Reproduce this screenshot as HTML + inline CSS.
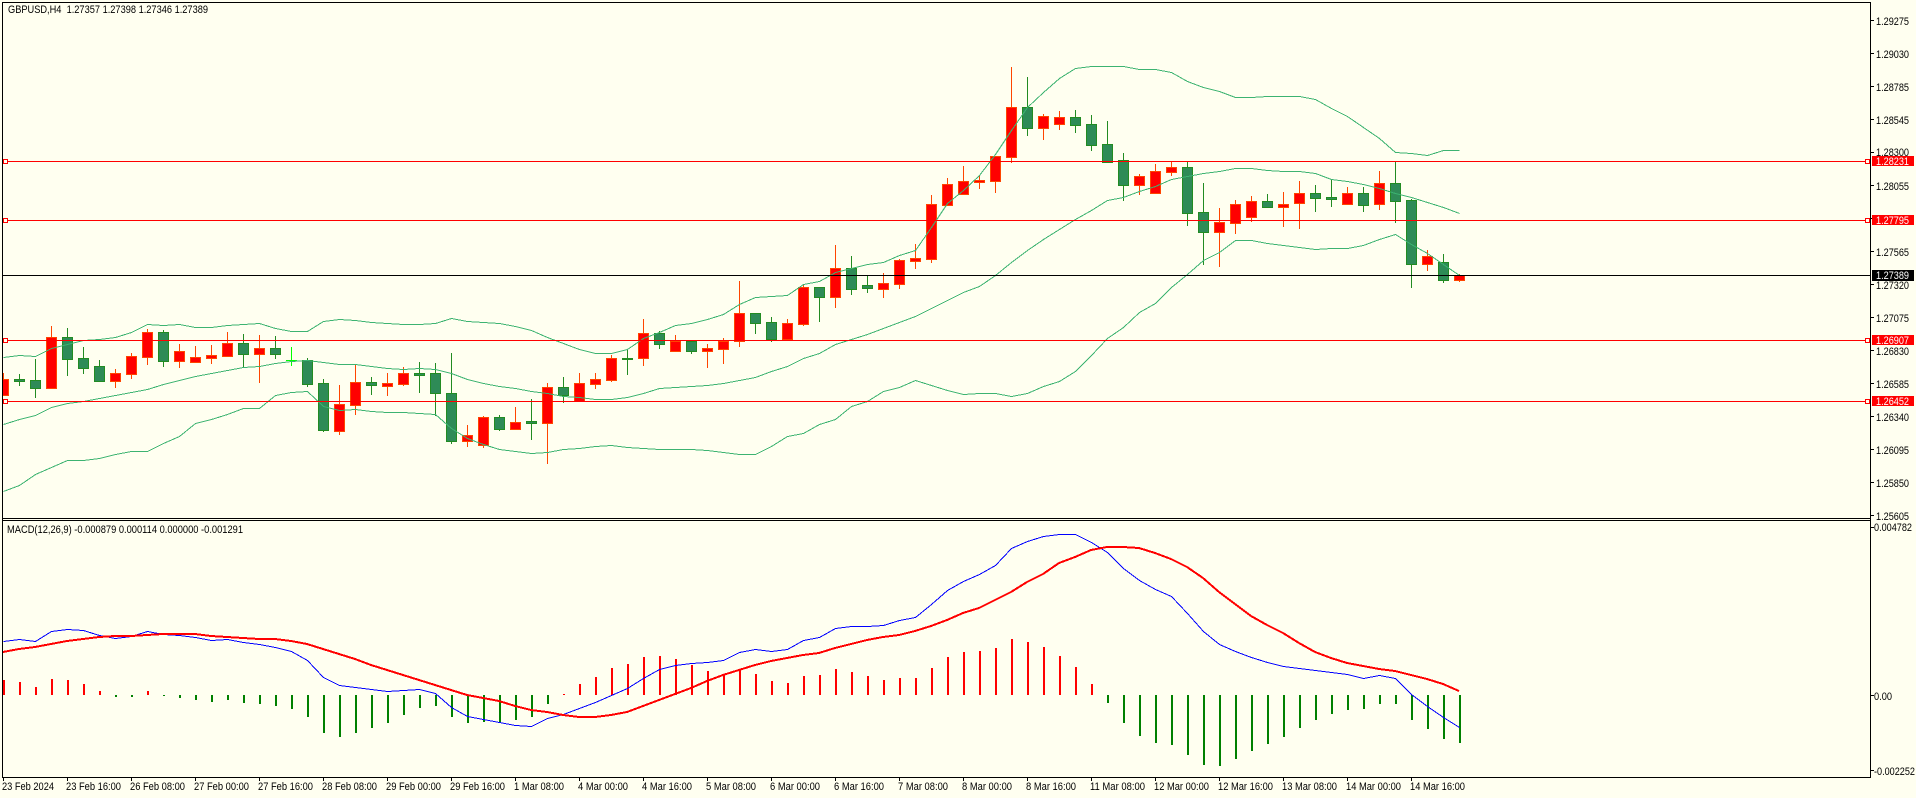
<!DOCTYPE html>
<html><head><meta charset="utf-8"><title>GBPUSD,H4</title>
<style>
html,body{margin:0;padding:0;width:1916px;height:798px;overflow:hidden;background:#fffff0}
svg{display:block;position:absolute;left:0;top:0}
text{font-family:"Liberation Sans",sans-serif;font-size:11px;fill:#000}
text.w{fill:#fff}
</style></head><body>
<svg width="1916" height="798" viewBox="0 0 1916 798" xmlns="http://www.w3.org/2000/svg">
<defs><clipPath id="c1"><rect x="3" y="3" width="1867" height="515"/></clipPath>
<clipPath id="c2"><rect x="3" y="521" width="1867" height="256"/></clipPath></defs>
<rect width="1916" height="798" fill="#fffff0"/>
<g clip-path="url(#c1)" shape-rendering="crispEdges">
<path fill="none" stroke="#ff4500" d="M3.5 373V396M51.5 326V388M115.5 369V388M131.5 353V379M147.5 329V365M179.5 344V368M195.5 346V362M211.5 345V364M227.5 332V357M259.5 335V383M339.5 385V435M355.5 365V415M387.5 373V396M403.5 367V386M467.5 425V447M483.5 416V448M515.5 407V430M547.5 383V464M579.5 373V401M595.5 373V389M611.5 355V382M643.5 319V366M675.5 335V351M707.5 344V368M723.5 338V364M739.5 281V347M787.5 319V341M803.5 284V326M835.5 245V308M883.5 273V298M899.5 259V289M915.5 244V269M931.5 195V263M947.5 178V205M963.5 166V194M979.5 176V189M995.5 156V193M1011.5 67V163M1043.5 114V140M1059.5 111V130M1139.5 174V195M1155.5 164V194M1171.5 162V176M1219.5 208V267M1235.5 200V234M1251.5 196V222M1283.5 192V227M1299.5 181V229M1347.5 187V205M1379.5 171V210M1427.5 250V271M1459.5 274V282"/>
<path fill="none" stroke="#228b22" d="M19.5 374V386M35.5 359V398M67.5 328V376M83.5 347V374M99.5 360V381M163.5 330V367M243.5 334V368M275.5 336V359M307.5 358V387M323.5 379V432M371.5 377V395M419.5 362V393M435.5 363V416M451.5 353V444M499.5 415V431M531.5 399V440M563.5 377V403M627.5 350V375M659.5 331V349M691.5 341V354M755.5 313V334M771.5 317V342M819.5 287V322M851.5 256V295M867.5 275V293M1027.5 77V136M1075.5 110V133M1091.5 115V151M1107.5 121V162M1123.5 153V201M1187.5 162V226M1203.5 183V265M1267.5 194V208M1315.5 185V212M1331.5 179V207M1363.5 187V212M1395.5 162V223M1411.5 199V288M1443.5 254V283"/>
<path fill="none" stroke="#00ff00" d="M291.5 347V366M286 360.5H297"/>
<g fill="#ff0000" stroke="#ff4500">
<rect x="-1.5" y="379.5" width="10" height="16"/><rect x="46.5" y="337.5" width="10" height="51"/><rect x="110.5" y="373.5" width="10" height="8"/><rect x="126.5" y="356.5" width="10" height="18"/><rect x="142.5" y="332.5" width="10" height="25"/><rect x="174.5" y="351.5" width="10" height="10"/><rect x="190.5" y="357.5" width="10" height="5"/><rect x="206.5" y="355.5" width="10" height="3"/><rect x="222.5" y="343.5" width="10" height="13"/><rect x="254.5" y="348.5" width="10" height="6"/><rect x="334.5" y="404.5" width="10" height="27"/><rect x="350.5" y="382.5" width="10" height="23"/><rect x="382.5" y="383.5" width="10" height="3"/><rect x="398.5" y="373.5" width="10" height="11"/><rect x="462.5" y="435.5" width="10" height="6"/><rect x="478.5" y="417.5" width="10" height="28"/><rect x="510.5" y="422.5" width="10" height="7"/><rect x="542.5" y="387.5" width="10" height="36"/><rect x="574.5" y="383.5" width="10" height="18"/><rect x="590.5" y="379.5" width="10" height="5"/><rect x="606.5" y="358.5" width="10" height="22"/><rect x="638.5" y="333.5" width="10" height="25"/><rect x="670.5" y="341.5" width="10" height="10"/><rect x="702.5" y="348.5" width="10" height="3"/><rect x="718.5" y="341.5" width="10" height="8"/><rect x="734.5" y="313.5" width="10" height="28"/><rect x="782.5" y="323.5" width="10" height="16"/><rect x="798.5" y="287.5" width="10" height="37"/><rect x="830.5" y="268.5" width="10" height="29"/><rect x="878.5" y="283.5" width="10" height="6"/><rect x="894.5" y="260.5" width="10" height="24"/><rect x="910.5" y="258.5" width="10" height="3"/><rect x="926.5" y="204.5" width="10" height="55"/><rect x="942.5" y="184.5" width="10" height="21"/><rect x="958.5" y="181.5" width="10" height="13"/><rect x="974.5" y="180.5" width="10" height="2"/><rect x="990.5" y="156.5" width="10" height="25"/><rect x="1006.5" y="107.5" width="10" height="50"/><rect x="1038.5" y="116.5" width="10" height="12"/><rect x="1054.5" y="117.5" width="10" height="7"/><rect x="1134.5" y="176.5" width="10" height="9"/><rect x="1150.5" y="171.5" width="10" height="22"/><rect x="1166.5" y="167.5" width="10" height="5"/><rect x="1214.5" y="222.5" width="10" height="10"/><rect x="1230.5" y="204.5" width="10" height="19"/><rect x="1246.5" y="201.5" width="10" height="16"/><rect x="1278.5" y="204.5" width="10" height="3"/><rect x="1294.5" y="193.5" width="10" height="10"/><rect x="1342.5" y="193.5" width="10" height="11"/><rect x="1374.5" y="183.5" width="10" height="21"/><rect x="1422.5" y="256.5" width="10" height="8"/><rect x="1454.5" y="275.5" width="10" height="5"/>
</g>
<g fill="#2e8b57" stroke="#228b22">
<rect x="14.5" y="379.5" width="10" height="2"/><rect x="30.5" y="380.5" width="10" height="8"/><rect x="62.5" y="337.5" width="10" height="22"/><rect x="78.5" y="358.5" width="10" height="10"/><rect x="94.5" y="366.5" width="10" height="15"/><rect x="158.5" y="332.5" width="10" height="29"/><rect x="238.5" y="343.5" width="10" height="11"/><rect x="270.5" y="348.5" width="10" height="6"/><rect x="302.5" y="360.5" width="10" height="24"/><rect x="318.5" y="383.5" width="10" height="47"/><rect x="366.5" y="382.5" width="10" height="3"/><rect x="414.5" y="373.5" width="10" height="2"/><rect x="430.5" y="373.5" width="10" height="20"/><rect x="446.5" y="393.5" width="10" height="48"/><rect x="494.5" y="417.5" width="10" height="12"/><rect x="526.5" y="421.5" width="10" height="2"/><rect x="558.5" y="387.5" width="10" height="8"/><rect x="622.5" y="358.5" width="10" height="1"/><rect x="654.5" y="333.5" width="10" height="11"/><rect x="686.5" y="341.5" width="10" height="10"/><rect x="750.5" y="313.5" width="10" height="10"/><rect x="766.5" y="322.5" width="10" height="17"/><rect x="814.5" y="287.5" width="10" height="10"/><rect x="846.5" y="268.5" width="10" height="21"/><rect x="862.5" y="285.5" width="10" height="3"/><rect x="1022.5" y="107.5" width="10" height="21"/><rect x="1070.5" y="117.5" width="10" height="8"/><rect x="1086.5" y="124.5" width="10" height="21"/><rect x="1102.5" y="144.5" width="10" height="18"/><rect x="1118.5" y="160.5" width="10" height="25"/><rect x="1182.5" y="167.5" width="10" height="46"/><rect x="1198.5" y="212.5" width="10" height="20"/><rect x="1262.5" y="201.5" width="10" height="6"/><rect x="1310.5" y="193.5" width="10" height="5"/><rect x="1326.5" y="197.5" width="10" height="2"/><rect x="1358.5" y="193.5" width="10" height="12"/><rect x="1390.5" y="183.5" width="10" height="18"/><rect x="1406.5" y="200.5" width="10" height="64"/><rect x="1438.5" y="262.5" width="10" height="18"/>
</g>
<g fill="none" stroke="#3cb371" transform="translate(.5 .5)">
<polyline points="3,357 19,355 35,356 51,348 67,344 83,340 99,339 115,337 131,332 147,324 163,325 179,324 195,327 211,327 227,325 243,324 259,323 275,328 291,331 307,331 323,321 339,319 355,320 371,322 387,323 403,324 419,324 435,323 451,318 467,321 483,322 499,323 515,326 531,330 547,337 563,343 579,349 595,353 611,353 627,349 643,338 659,332 675,325 691,323 707,319 723,314 739,304 755,297 771,296 787,295 803,284 819,281 835,272 851,268 867,264 883,262 899,255 915,250 931,227 947,203 963,190 979,175 995,154 1011,130 1027,107 1043,92 1059,78 1075,68 1091,66 1107,66 1123,66 1139,69 1155,69 1171,72 1187,81 1203,87 1219,91 1235,97 1251,97 1267,96 1283,96 1299,96 1315,99 1331,108 1347,116 1363,127 1379,138 1395,152 1411,153 1427,155 1443,150 1459,150"/>
<polyline points="3,424 19,419 35,415 51,407 67,403 83,401 99,398 115,395 131,392 147,389 163,384 179,380 195,376 211,373 227,370 243,367 259,366 275,363 291,361 307,360 323,362 339,364 355,364 371,366 387,368 403,369 419,368 435,369 451,373 467,379 483,383 499,386 515,388 531,391 547,393 563,396 579,397 595,399 611,399 627,397 643,393 659,388 675,387 691,386 707,385 723,383 739,380 755,377 771,371 787,366 803,358 819,353 835,344 851,339 867,334 883,328 899,322 915,316 931,308 947,300 963,292 979,286 995,275 1011,262 1027,250 1043,239 1059,229 1075,219 1091,210 1107,200 1123,197 1139,191 1155,186 1171,179 1187,176 1203,173 1219,171 1235,168 1251,168 1267,170 1283,171 1299,171 1315,173 1331,179 1347,181 1363,184 1379,188 1395,193 1411,197 1427,202 1443,207 1459,213"/>
<polyline points="3,491 19,485 35,474 51,467 67,460 83,460 99,458 115,454 131,451 147,451 163,443 179,436 195,423 211,419 227,414 243,408 259,408 275,395 291,392 307,391 323,406 339,410 355,409 371,411 387,412 403,412 419,413 435,414 451,428 467,438 483,444 499,449 515,451 531,453 547,452 563,449 579,448 595,446 611,445 627,447 643,448 659,449 675,449 691,449 707,450 723,452 739,454 755,454 771,446 787,436 803,433 819,424 835,419 851,406 867,401 883,391 899,387 915,380 931,385 947,390 963,394 979,393 995,393 1011,396 1027,393 1043,386 1059,381 1075,371 1091,355 1107,338 1123,327 1139,312 1155,303 1171,287 1187,274 1203,260 1219,252 1235,240 1251,240 1267,243 1283,245 1299,247 1315,249 1331,248 1347,248 1363,245 1379,239 1395,234 1411,244 1427,253 1443,264 1459,275"/>
</g>
</g>
<g clip-path="url(#c2)" shape-rendering="crispEdges">
<path fill="none" stroke="#ff0000" stroke-width="2" d="M4 695V680M20 695V682M36 695V687M52 695V679M68 695V680M84 695V684M100 695V691M148 695V691M564 695V694M580 695V684M596 695V677M612 695V668M628 695V664M644 695V657M660 695V656M676 695V659M692 695V665M708 695V671M724 695V675M740 695V670M756 695V674M772 695V681M788 695V683M804 695V676M820 695V675M836 695V669M852 695V672M868 695V676M884 695V680M900 695V678M916 695V678M932 695V668M948 695V657M964 695V652M980 695V651M996 695V648M1012 695V639M1028 695V642M1044 695V647M1060 695V656M1076 695V667M1092 695V684"/>
<path fill="none" stroke="#008000" stroke-width="2" d="M116 695V697M132 695V697M164 695V696M180 695V698M196 695V700M212 695V702M228 695V700M244 695V703M260 695V704M276 695V706M292 695V709M308 695V717M324 695V733M340 695V737M356 695V733M372 695V728M388 695V723M404 695V715M420 695V708M436 695V706M452 695V717M468 695V723M484 695V722M500 695V723M516 695V720M532 695V717M548 695V704M1108 695V703M1124 695V723M1140 695V736M1156 695V743M1172 695V745M1188 695V755M1204 695V765M1220 695V766M1236 695V759M1252 695V751M1268 695V744M1284 695V737M1300 695V728M1316 695V720M1332 695V714M1348 695V710M1364 695V709M1380 695V704M1396 695V704M1412 695V720M1428 695V729M1444 695V739M1460 695V743"/>
<polyline transform="translate(.5 .5)" fill="none" stroke="#0000ff" points="3,641 19,639 35,641 51,631 67,629 83,630 99,635 115,638 131,636 147,631 163,634 179,635 195,637 211,640 227,639 243,642 259,644 275,647 291,651 307,660 323,677 339,685 355,687 371,689 387,691 403,690 419,689 435,693 451,707 467,716 483,719 499,722 515,725 531,726 547,718 563,714 579,708 595,702 611,695 627,688 643,678 659,669 675,665 691,663 707,662 723,660 739,652 755,649 771,651 787,649 803,640 819,637 835,628 851,626 867,626 883,625 899,620 915,617 931,604 947,590 963,581 979,574 995,565 1011,548 1027,541 1043,536 1059,534 1075,534 1091,542 1107,552 1123,568 1139,580 1155,589 1171,596 1187,613 1203,631 1219,644 1235,651 1251,657 1267,662 1283,666 1299,668 1315,670 1331,672 1347,674 1363,678 1379,675 1395,678 1411,694 1427,706 1443,717 1459,727"/>
<polyline fill="none" stroke="#ff0000" stroke-width="2" points="3,652 19,649 35,647 51,644 67,641 83,639 99,637 115,636 131,636 147,635 163,634 179,634 195,634 211,636 227,637 243,638 259,639 275,639 291,641 307,644 323,649 339,654 355,659 371,665 387,670 403,675 419,680 435,685 451,690 467,695 483,698 499,701 515,706 531,710 547,712 563,715 579,717 595,717 611,715 627,712 643,706 659,700 675,694 691,688 707,681 723,675 739,670 755,665 771,661 787,658 803,655 819,653 835,648 851,644 867,640 883,637 899,635 915,631 931,626 947,620 963,613 979,608 995,600 1011,592 1027,582 1043,574 1059,563 1075,557 1091,550 1107,547 1123,547 1139,548 1155,553 1171,559 1187,567 1203,578 1219,592 1235,604 1251,616 1267,625 1283,633 1299,643 1315,652 1331,658 1347,663 1363,666 1379,669 1395,671 1411,675 1427,679 1443,684 1459,691"/>
</g>
<g shape-rendering="crispEdges">
<path fill="none" stroke="#ff0000" d="M3 161.5H1870M3 220.5H1870M3 340.5H1870M3 401.5H1870"/>
<path fill="none" stroke="#000" d="M3 275.5H1870"/>
<g fill="#fffff0" stroke="#ff0000">
<rect x="3.5" y="159.5" width="4" height="4"/><rect x="3.5" y="218.5" width="4" height="4"/><rect x="3.5" y="338.5" width="4" height="4"/><rect x="3.5" y="399.5" width="4" height="4"/>
<rect x="1865.5" y="159.5" width="4" height="4"/><rect x="1865.5" y="218.5" width="4" height="4"/><rect x="1865.5" y="338.5" width="4" height="4"/><rect x="1865.5" y="399.5" width="4" height="4"/>
</g>
<path fill="none" stroke="#000" d="M2 2.5H1871M2.5 2V778M1870.5 2V778M2 518.5H1871M2 520.5H1871M2 777.5H1871"/>
<path fill="none" stroke="#000" d="M1871 20.5h3M1871 53.5h3M1871 86.5h3M1871 119.5h3M1871 152.5h3M1871 185.5h3M1871 218.5h3M1871 251.5h3M1871 284.5h3M1871 317.5h3M1871 350.5h3M1871 383.5h3M1871 416.5h3M1871 449.5h3M1871 482.5h3M1871 515.5h3M1871 527.5h3M1871 695.5h3M1871 770.5h3M3.5 778v3M67.5 778v3M131.5 778v3M195.5 778v3M259.5 778v3M323.5 778v3M387.5 778v3M451.5 778v3M515.5 778v3M579.5 778v3M643.5 778v3M707.5 778v3M771.5 778v3M835.5 778v3M899.5 778v3M963.5 778v3M1027.5 778v3M1091.5 778v3M1155.5 778v3M1219.5 778v3M1283.5 778v3M1347.5 778v3M1411.5 778v3"/>
<rect x="1872" y="156" width="42" height="10" fill="#ff0000"/><rect x="1872" y="215" width="42" height="10" fill="#ff0000"/><rect x="1872" y="335" width="42" height="10" fill="#ff0000"/><rect x="1872" y="396" width="42" height="10" fill="#ff0000"/>
<rect x="1872" y="270" width="42" height="11" fill="#000"/>
</g>
<g lengthAdjust="spacingAndGlyphs">
<text x="8" y="13" textLength="200" lengthAdjust="spacingAndGlyphs" xml:space="preserve">GBPUSD,H4  1.27357 1.27398 1.27346 1.27389</text>
<text x="7" y="533" textLength="236" lengthAdjust="spacingAndGlyphs">MACD(12,26,9) -0.000879 0.000114 0.000000 -0.001291</text>
<text x="1876" y="25" textLength="33" lengthAdjust="spacingAndGlyphs">1.29275</text>
<text x="1876" y="58" textLength="33" lengthAdjust="spacingAndGlyphs">1.29030</text>
<text x="1876" y="91" textLength="33" lengthAdjust="spacingAndGlyphs">1.28785</text>
<text x="1876" y="124" textLength="33" lengthAdjust="spacingAndGlyphs">1.28545</text>
<text x="1876" y="156" textLength="33" lengthAdjust="spacingAndGlyphs">1.28300</text>
<text x="1876" y="190" textLength="33" lengthAdjust="spacingAndGlyphs">1.28055</text>
<text x="1876" y="256" textLength="33" lengthAdjust="spacingAndGlyphs">1.27565</text>
<text x="1876" y="289" textLength="33" lengthAdjust="spacingAndGlyphs">1.27320</text>
<text x="1876" y="322" textLength="33" lengthAdjust="spacingAndGlyphs">1.27075</text>
<text x="1876" y="355" textLength="33" lengthAdjust="spacingAndGlyphs">1.26830</text>
<text x="1876" y="388" textLength="33" lengthAdjust="spacingAndGlyphs">1.26585</text>
<text x="1876" y="421" textLength="33" lengthAdjust="spacingAndGlyphs">1.26340</text>
<text x="1876" y="454" textLength="33" lengthAdjust="spacingAndGlyphs">1.26095</text>
<text x="1876" y="487" textLength="33" lengthAdjust="spacingAndGlyphs">1.25850</text>
<text x="1876" y="520" textLength="33" lengthAdjust="spacingAndGlyphs">1.25605</text>
<text class="w" x="1876" y="165" textLength="33" lengthAdjust="spacingAndGlyphs">1.28231</text>
<text class="w" x="1876" y="224" textLength="33" lengthAdjust="spacingAndGlyphs">1.27795</text>
<text class="w" x="1876" y="344" textLength="33" lengthAdjust="spacingAndGlyphs">1.26907</text>
<text class="w" x="1876" y="405" textLength="33" lengthAdjust="spacingAndGlyphs">1.26452</text>
<text class="w" x="1876" y="279" textLength="33" lengthAdjust="spacingAndGlyphs">1.27389</text>
<text x="1874" y="531" textLength="38" lengthAdjust="spacingAndGlyphs">0.004782</text>
<text x="1874" y="700" textLength="18" lengthAdjust="spacingAndGlyphs">0.00</text>
<text x="1874" y="775" textLength="41" lengthAdjust="spacingAndGlyphs">-0.002252</text>
<text x="2" y="790" textLength="52" lengthAdjust="spacingAndGlyphs">23 Feb 2024</text>
<text x="66" y="790" textLength="55" lengthAdjust="spacingAndGlyphs">23 Feb 16:00</text>
<text x="130" y="790" textLength="55" lengthAdjust="spacingAndGlyphs">26 Feb 08:00</text>
<text x="194" y="790" textLength="55" lengthAdjust="spacingAndGlyphs">27 Feb 00:00</text>
<text x="258" y="790" textLength="55" lengthAdjust="spacingAndGlyphs">27 Feb 16:00</text>
<text x="322" y="790" textLength="55" lengthAdjust="spacingAndGlyphs">28 Feb 08:00</text>
<text x="386" y="790" textLength="55" lengthAdjust="spacingAndGlyphs">29 Feb 00:00</text>
<text x="450" y="790" textLength="55" lengthAdjust="spacingAndGlyphs">29 Feb 16:00</text>
<text x="514" y="790" textLength="50" lengthAdjust="spacingAndGlyphs">1 Mar 08:00</text>
<text x="578" y="790" textLength="50" lengthAdjust="spacingAndGlyphs">4 Mar 00:00</text>
<text x="642" y="790" textLength="50" lengthAdjust="spacingAndGlyphs">4 Mar 16:00</text>
<text x="706" y="790" textLength="50" lengthAdjust="spacingAndGlyphs">5 Mar 08:00</text>
<text x="770" y="790" textLength="50" lengthAdjust="spacingAndGlyphs">6 Mar 00:00</text>
<text x="834" y="790" textLength="50" lengthAdjust="spacingAndGlyphs">6 Mar 16:00</text>
<text x="898" y="790" textLength="50" lengthAdjust="spacingAndGlyphs">7 Mar 08:00</text>
<text x="962" y="790" textLength="50" lengthAdjust="spacingAndGlyphs">8 Mar 00:00</text>
<text x="1026" y="790" textLength="50" lengthAdjust="spacingAndGlyphs">8 Mar 16:00</text>
<text x="1090" y="790" textLength="55" lengthAdjust="spacingAndGlyphs">11 Mar 08:00</text>
<text x="1154" y="790" textLength="55" lengthAdjust="spacingAndGlyphs">12 Mar 00:00</text>
<text x="1218" y="790" textLength="55" lengthAdjust="spacingAndGlyphs">12 Mar 16:00</text>
<text x="1282" y="790" textLength="55" lengthAdjust="spacingAndGlyphs">13 Mar 08:00</text>
<text x="1346" y="790" textLength="55" lengthAdjust="spacingAndGlyphs">14 Mar 00:00</text>
<text x="1410" y="790" textLength="55" lengthAdjust="spacingAndGlyphs">14 Mar 16:00</text>
</g>
</svg>
</body></html>
